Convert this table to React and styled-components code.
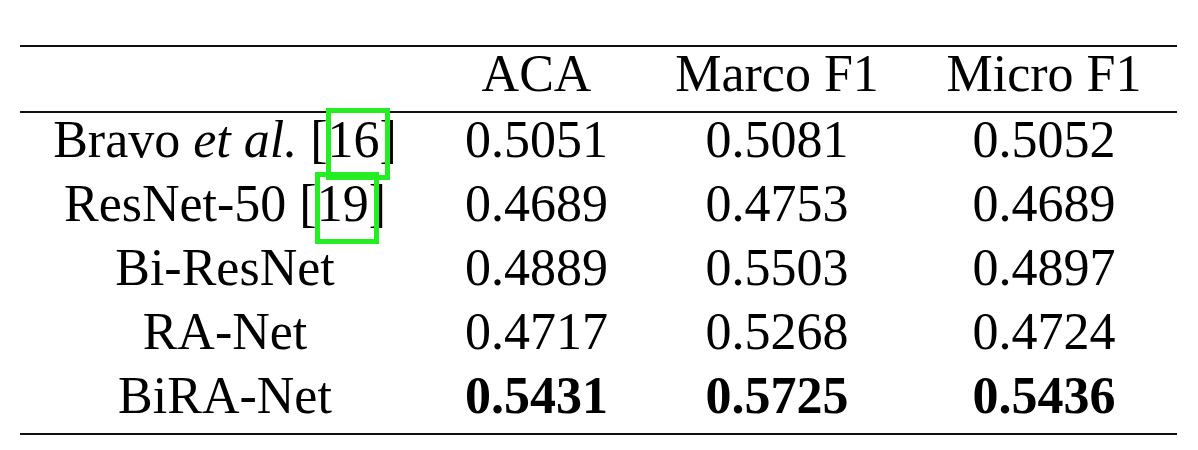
import * as React from 'react'
import styled, { createGlobalStyle } from 'styled-components'

const Global = createGlobalStyle`
  html, body {
    margin: 0;
    padding: 0;
    background: #fff;
  }
`

const Page = styled.div`
  padding: 45px 0 0 20px;
  height: 405px;
  font-family: 'Liberation Serif', 'Times New Roman', serif;
  color: #000;
`

const Table = styled.table`
  border-collapse: collapse;
  table-layout: fixed;
  width: 1157px;
  border-top: 2px solid #111;
  border-bottom: 2px solid #111;
`

const Head = styled.thead`
  border-bottom: 2px solid #111;
`

const Body = styled.tbody``

const Cell = styled.td`
  font-size: 52px;
  line-height: 52px;
  padding: 1px 0 11px;
  text-align: center;
  white-space: nowrap;
  font-weight: ${(p) => (p.$bold ? 700 : 400)};

  em {
    font-style: italic;
  }
`

// green highlight drawn over the citation number
const Cite = styled.span`
  position: relative;

  &::after {
    content: '';
    position: absolute;
    top: -3px;
    bottom: -12px;
    left: -2px;
    right: -10px;
    border: 5px solid #22ee22;
  }
`

const rows = [
  { name: <>Bravo <em>et al.</em> [<Cite>16</Cite>]</>, values: ['0.5051', '0.5081', '0.5052'] },
  { name: <>ResNet-50 [<Cite>19</Cite>]</>, values: ['0.4689', '0.4753', '0.4689'] },
  { name: 'Bi-ResNet', values: ['0.4889', '0.5503', '0.4897'] },
  { name: 'RA-Net', values: ['0.4717', '0.5268', '0.4724'] },
  { name: 'BiRA-Net', values: ['0.5431', '0.5725', '0.5436'], best: true },
]

export default function App() {
  return (
    <Page>
      <Global />
      <Table>
        <colgroup>
          <col style={{ width: 410 }} />
          <col style={{ width: 213 }} />
          <col style={{ width: 268 }} />
          <col style={{ width: 266 }} />
        </colgroup>
        <Head>
          <tr>
            <Cell />
            <Cell>ACA</Cell>
            <Cell>Marco F1</Cell>
            <Cell>Micro F1</Cell>
          </tr>
        </Head>
        <Body>
          {rows.map((r, i) => (
            <tr key={i}>
              <Cell>{r.name}</Cell>
              {r.values.map((v, j) => (
                <Cell key={j} $bold={r.best}>{v}</Cell>
              ))}
            </tr>
          ))}
        </Body>
      </Table>
    </Page>
  )
}
